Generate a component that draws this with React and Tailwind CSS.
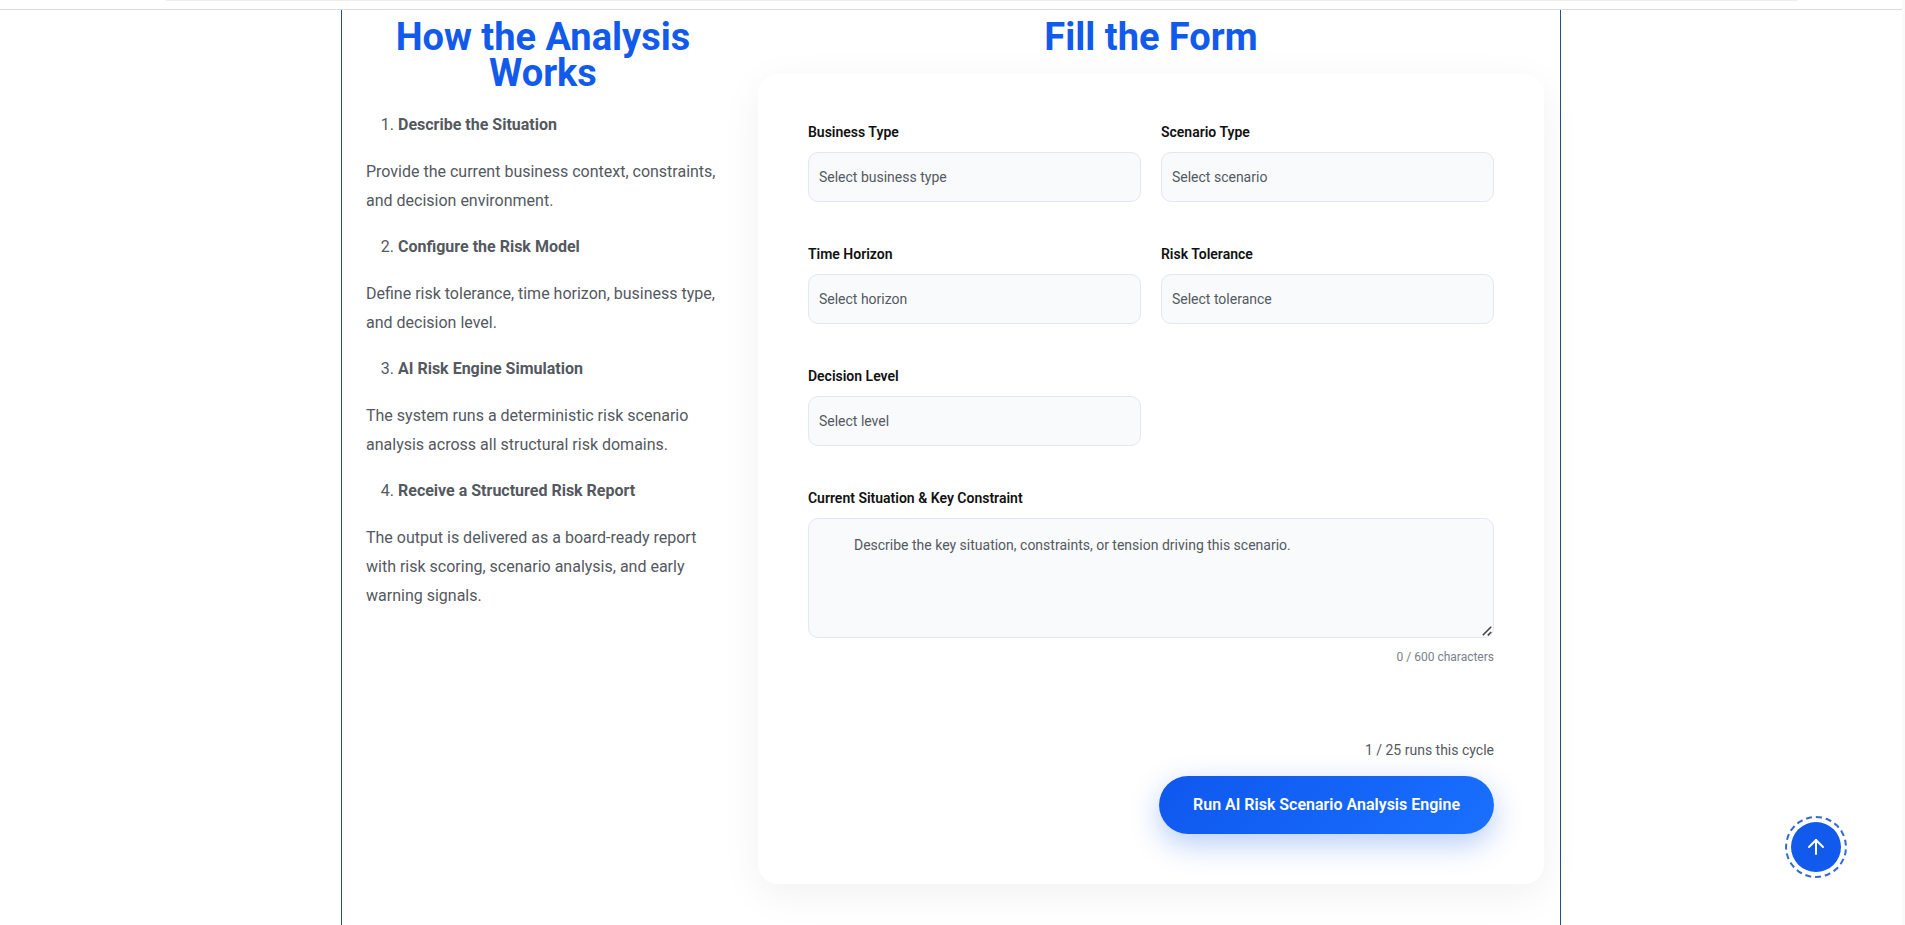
import { ArrowUp } from "lucide-react";

const STEPS = [
  {
    title: "Describe the Situation",
    text: "Provide the current business context, constraints, and decision environment.",
  },
  {
    title: "Configure the Risk Model",
    text: "Define risk tolerance, time horizon, business type, and decision level.",
  },
  {
    title: "AI Risk Engine Simulation",
    text: "The system runs a deterministic risk scenario analysis across all structural risk domains.",
  },
  {
    title: "Receive a Structured Risk Report",
    text: "The output is delivered as a board-ready report with risk scoring, scenario analysis, and early warning signals.",
  },
];

const FIELDS = [
  { id: "business-type", label: "Business Type", placeholder: "Select business type" },
  { id: "scenario-type", label: "Scenario Type", placeholder: "Select scenario" },
  { id: "time-horizon", label: "Time Horizon", placeholder: "Select horizon" },
  { id: "risk-tolerance", label: "Risk Tolerance", placeholder: "Select tolerance" },
  { id: "decision-level", label: "Decision Level", placeholder: "Select level" },
];

function Heading({ children }) {
  return (
    <h2 className="text-center text-[38px] leading-[36px] font-bold text-[#125aeb]">{children}</h2>
  );
}

function FieldLabel({ htmlFor, children }) {
  return (
    <label htmlFor={htmlFor} className="mb-[9px] block text-sm leading-[22px] font-semibold text-[#111111]">
      {children}
    </label>
  );
}

function SelectField({ id, label, placeholder }) {
  return (
    <div>
      <FieldLabel htmlFor={id}>{label}</FieldLabel>
      <select
        id={id}
        defaultValue=""
        className="block h-[50px] w-full appearance-none rounded-[10px] border border-[#e2e8f0] bg-[#f8fafc] px-[10px] text-sm text-[#54595f]"
      >
        <option value="">{placeholder}</option>
      </select>
    </div>
  );
}

function Steps() {
  return (
    <section className="pt-[9px]">
      <Heading>
        How the Analysis
        <br />
        Works
      </Heading>
      <div className="mt-[19px] px-6 text-base leading-[29px] text-[#54595f]">
        {STEPS.map((step, index) => (
          <div key={step.title}>
            <ol start={index + 1} className="mb-[18px] list-decimal pl-8">
              <li>
                <strong className="font-bold">{step.title}</strong>
              </li>
            </ol>
            <p className="mb-[17px]">{step.text}</p>
          </div>
        ))}
      </div>
    </section>
  );
}

function ScenarioForm() {
  return (
    <section className="pt-[9px] pr-4 pl-[14px]">
      <Heading>Fill the Form</Heading>
      <form className="mt-[19px] rounded-[20px] bg-white px-[50px] pt-[47px] pb-[50px] shadow-[0_10px_40px_rgba(0,0,0,0.06)]">
        <div className="grid grid-cols-2 gap-x-5 gap-y-[41px]">
          {FIELDS.map((field) => (
            <SelectField key={field.id} {...field} />
          ))}
          <div className="col-span-2">
            <FieldLabel htmlFor="situation">Current Situation &amp; Key Constraint</FieldLabel>
            <div className="relative">
              <textarea
                id="situation"
                placeholder="Describe the key situation, constraints, or tension driving this scenario."
                className="block h-[120px] w-full resize rounded-[10px] border border-[#e2e8f0] bg-[#f8fafc] py-[15px] pr-4 pl-[45px] text-sm leading-[22px] text-[#54595f] placeholder:text-[#54595f] [&::-webkit-resizer]:hidden"
              />
              <svg
                viewBox="0 0 10 10"
                className="pointer-events-none absolute right-[2px] bottom-[2px] size-[10px]"
                stroke="#444444"
                strokeWidth="1.6"
                aria-hidden="true"
              >
                <path d="M0.8 9.2 9.2 0.8M5.8 9.4 9.2 6" />
              </svg>
            </div>
            <p className="mt-2 text-right text-xs leading-[22px] text-[#7a808c]">0 / 600 characters</p>
          </div>
        </div>
        <div className="mt-[71px] flex flex-col items-end gap-[15px]">
          <p className="text-sm leading-[22px] text-[#54595f]">1 / 25 runs this cycle</p>
          <button
            type="button"
            className="h-[58px] rounded-full bg-linear-135 from-[#0f57ee] to-[#1a70ff] px-[34px] text-base font-semibold text-white shadow-[0_10px_30px_rgba(18,90,235,0.3)]"
          >
            Run AI Risk Scenario Analysis Engine
          </button>
        </div>
      </form>
    </section>
  );
}

export default function App() {
  return (
    <div className="flex min-h-screen bg-white font-['Roboto',sans-serif]">
      <div className="flex flex-1 flex-col">
        <header className="h-[10px] border-b border-[#dddddd]">
          <div className="mr-[104px] ml-[166px] border-t border-[#eeeef1]" />
        </header>
        <main className="mx-auto grid w-full max-w-[1220px] flex-1 grid-cols-[33fr_67fr] border-x border-[#215280] pb-10">
          <Steps />
          <ScenarioForm />
        </main>
      </div>
      <div className="w-[3px] bg-[#fafafa]" />
      <a
        href="#top"
        aria-label="Back to top"
        className="fixed right-[58px] bottom-[47px] flex size-[62px] items-center justify-center rounded-full border-2 border-dashed border-[#3469cf]"
      >
        <span className="flex size-[50px] items-center justify-center rounded-full bg-[#125aeb] text-white">
          <ArrowUp size={24} strokeWidth={2} />
        </span>
      </a>
    </div>
  );
}
